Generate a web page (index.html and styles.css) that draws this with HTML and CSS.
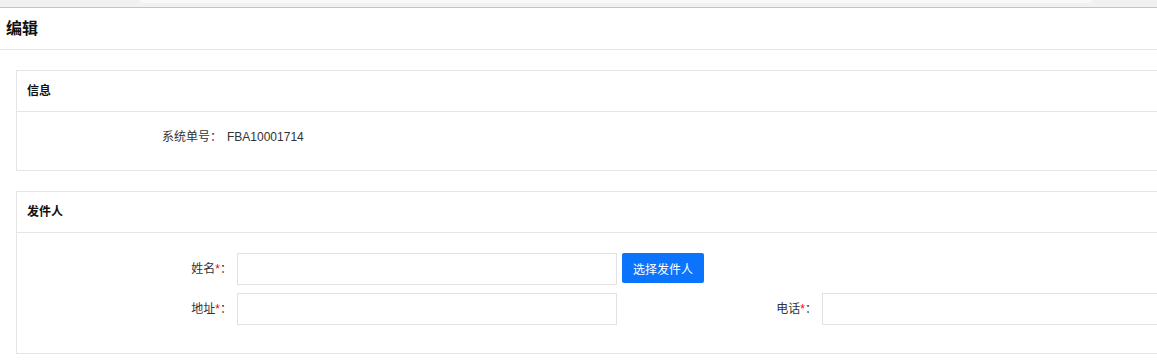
FILE: index.html
```html
<!DOCTYPE html>
<html lang="zh-CN">
<head>
<meta charset="utf-8">
<title>编辑</title>
<link rel="stylesheet" href="styles.css">
</head>
<body>
<div class="topbar"><div class="topbar-tab"></div></div>
<div class="page-head"><h1 class="page-title">编辑</h1></div>
<div class="content">
  <section class="panel">
    <div class="panel-head">信息</div>
    <div class="panel-body info-body">
      <div class="info-row">
        <span class="info-label">系统单号：</span>
        <span class="info-value">FBA10001714</span>
      </div>
    </div>
  </section>
  <section class="panel">
    <div class="panel-head">发件人</div>
    <div class="panel-body form-body">
      <div class="form-row">
        <label class="form-label">姓名<span class="req">*</span>：</label>
        <input class="form-input" type="text">
        <button class="btn-primary" type="button">选择发件人</button>
      </div>
      <div class="form-row">
        <label class="form-label">地址<span class="req">*</span>：</label>
        <input class="form-input" type="text">
        <label class="form-label form-label-2">电话<span class="req">*</span>：</label>
        <input class="form-input form-input-wide" type="text">
      </div>
    </div>
  </section>
</div>
</body>
</html>
```
FILE: styles.css
```css
html, body {
  margin: 0;
  padding: 0;
  overflow: hidden;
  background: #fff;
}
body {
  font-family: "Liberation Sans", "Noto Sans CJK SC", sans-serif;
  font-size: 12px;
  color: #333;
}
.topbar {
  height: 7px;
  background: #f1f1f1;
  border-bottom: 1px solid #c4c4c4;
}
.topbar-tab {
  margin-left: 140px;
  width: 952px;
  height: 3px;
  background: #f9f9f9;
  border-radius: 0 0 4px 4px;
}
.page-head {
  height: 41px;
  border-bottom: 1px solid #e5e5e5;
  display: flex;
  align-items: center;
  padding-left: 6px;
}
.page-title {
  margin: 0;
  font-size: 16px;
  font-weight: bold;
  color: #111;
  line-height: 20px;
}
.content {
  padding: 20px 0 0 16px;
  display: flex;
  flex-direction: column;
  gap: 20px;
}
.panel {
  border: 1px solid #e5e5e5;
  border-right: none;
}
.panel-head {
  height: 40px;
  line-height: 40px;
  padding-left: 10px;
  font-weight: bold;
  color: #111;
  border-bottom: 1px solid #e5e5e5;
}
.info-body {
  padding: 15px 0 23px;
}
.info-row {
  display: flex;
  line-height: 20px;
}
.info-label {
  width: 205px;
  text-align: right;
  margin-right: 5px;
}
.form-body {
  padding: 20px 0 28px;
  display: flex;
  flex-direction: column;
  gap: 8px;
}
.form-row {
  display: flex;
  align-items: center;
}
.form-label {
  flex: none;
  width: 215px;
  margin-right: 5px;
  text-align: right;
  line-height: 20px;
}
.form-label-2 {
  width: 200px;
}
.req {
  color: #f00;
}
.form-input {
  flex: none;
  box-sizing: border-box;
  width: 380px;
  height: 32px;
  border: 1px solid #e2e2e2;
  margin: 0;
  padding: 0 8px;
  font: inherit;
  outline: none;
  background: #fff;
}
.form-input-wide {
  flex: 1;
  width: auto;
  min-width: 0;
  border-right: none;
}
.btn-primary {
  flex: none;
  margin-left: 5px;
  box-sizing: border-box;
  width: 82px;
  height: 30px;
  align-self: flex-start;
  background: #0a74ff;
  border: none;
  border-radius: 2px;
  color: #fff;
  font: inherit;
  font-size: 12px;
  padding: 0;
}
```
